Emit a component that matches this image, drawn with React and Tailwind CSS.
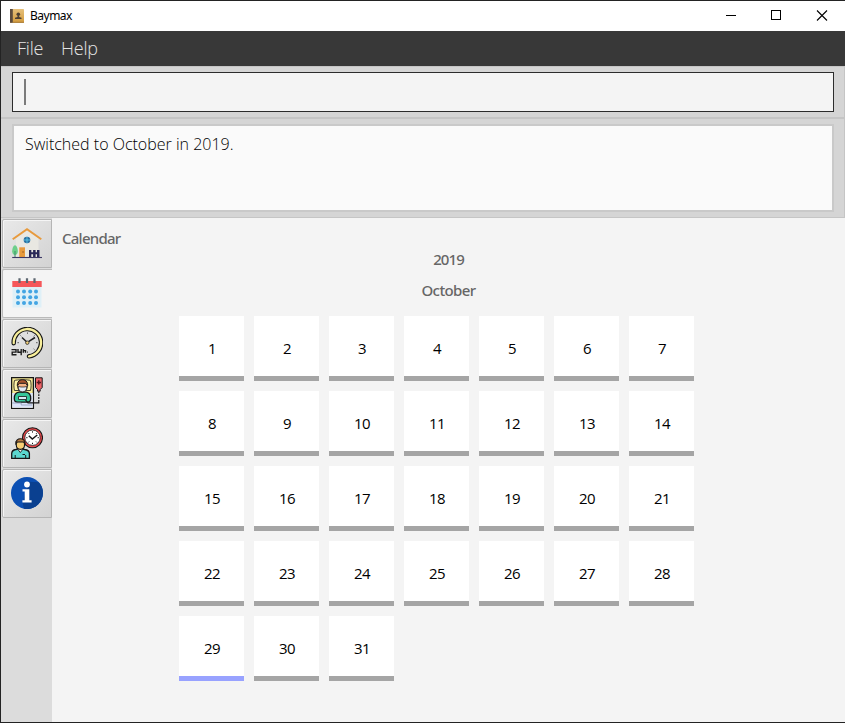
import React from "react";

const HomeIcon = () => (
  <svg width="32" height="32" viewBox="0 0 32 32">
    <path d="M5 11.500 16 3.500l11.500 8V30H5z" fill="#e9e8e2" />
    <path d="M1.700 12.200 16 2.200l14.300 10" fill="none" stroke="#e89a3c" strokeWidth="1.900" />
    <circle cx="16" cy="13" r="3.300" fill="#2b6fa0" />
    <path d="M16 9.700v6.600M12.700 13h6.600" stroke="#5fd0f0" strokeWidth=".8" />
    <rect x="8.300" y="20.300" width="5.700" height="9.700" fill="#e89a3c" />
    <rect x="11.300" y="24.500" width="1.500" height="1" fill="#8a4f1c" />
    <path d="M4 18.300c1.700 0 2.800 3.500 2.800 6S5.500 28 4 28s-2.800-1.200-2.800-3.700S2.300 18.300 4 18.300z" fill="#6ccf8a" />
    <path d="M4 24v6" stroke="#3f8f68" strokeWidth="1" />
    <path d="M18 23h2.300v7H18zM22.100 23h2.500v7h-2.500zM26 23h2.500v7H26zM18 25.200h10.500v2H18z" fill="#2a2858" />
    <path d="M1.200 30.500h29.800" stroke="#3c3966" strokeWidth="1.100" />
  </svg>
);

const CalendarIcon = () => (
  <svg width="32" height="32" viewBox="0 0 32 32">
    <rect x="1.500" y="9" width="29" height="21.500" fill="#dff0f7" />
    <rect x="1.300" y="4" width="29.400" height="6" fill="#f5575a" />
    <path d="M8.500 1.300v4.600M16 1.300v4.600M23.500 1.300v4.600" stroke="#5c6670" strokeWidth="2.200" />
    {[14.500, 20.200, 26].map((y) =>
      [7, 13, 19.200, 25].map((x) => <circle key={`${x}-${y}`} cx={x} cy={y} r="2" fill="#43a5e3" />)
    )}
  </svg>
);

const ClockIcon = () => (
  <svg width="32" height="32" viewBox="0 0 32 32" fill="none">
    <path d="M2.700 16.200A13.700 13.700 0 1 1 18 29.300" stroke="#161616" strokeWidth="4.500" strokeLinecap="round" />
    <path d="M2.700 16.200A13.700 13.700 0 1 1 18 29.300" stroke="#f8ef9b" strokeWidth="2.300" strokeLinecap="round" />
    <path d="M16.500 5.500v1.200M26.500 15.700h-1.300M6.500 15.700h1.300M16.500 25.700v-1.200M9.500 8.500l.8.8M23.500 8.500l-.8.8M23.500 22.700l-.8-.8" stroke="#444" strokeWidth="1" />
    <path d="M11 10.500l4.500 4.300M17.500 14.700l6.500-4.200" stroke="#222" strokeWidth="1.500" />
    <circle cx="16.300" cy="15.700" r="1.700" fill="#f1cf78" stroke="#222" strokeWidth=".8" />
    <path d="M.5 22.600h4.500v2.500H1.200v2.700h4.300M7 22v3.300h3.500M10.200 22v6.300M12.300 22v3.700M12.300 23.600h2.200v2.100" stroke="#1c1c1c" strokeWidth="1.400" />
  </svg>
);

const PatientIcon = () => (
  <svg width="32" height="32" viewBox="0 0 32 32" stroke="#171717" strokeWidth="1">
    <path d="M.6.600h21.800v30.800H.6z" fill="#f6e993" strokeWidth="1.300" />
    <path d="M1.200 16h20.600v14.800H1.200z" fill="#dbe4fb" stroke="none" />
    <path d="M3.500 3.500c2.500-1 13.500-1 16 0 .8 3 .8 7 0 10h-16c-.8-3-.8-7 0-10z" fill="#fff3a8" strokeWidth=".8" />
    <path d="M3.300 21.500c0-4.300 2-6 4.700-6.300h7c2.700.3 4.700 2 4.700 6.300 0 2.500-1 3.700-3.200 3.700h-10c-2.200 0-3.200-1.200-3.200-3.700z" fill="#35c79a" strokeWidth="1.300" />
    <path d="M7.500 19.500h8v3h-8z" fill="#d9eef8" strokeWidth=".8" />
    <path d="M6.700 8.500c0 4.500 2 6.500 4.800 6.500s4.800-2 4.800-6.500l-1.500-4H8.200z" fill="#f4b183" />
    <path d="M6.300 8.500C5.800.8 17.200.8 16.700 8.500l-2-2.200H8.300z" fill="#a9542c" />
    <path d="M7.300 9.500l2.700.5h3l2.700-.5c0 3.500-1.500 5.300-4.200 5.300s-4.200-1.800-4.200-5.300z" fill="#e3ebf7" strokeWidth=".7" />
    <path d="M1.200 26h9v2h11" fill="none" stroke="#8d9bb8" strokeWidth=".8" />
    <path d="M24.500.8h6.700v9.700l-2 2v1.700h-2.700v-1.700l-2-2z" fill="#ee6368" />
    <path d="M27.800 3.300v4.200M25.700 5.400H30" stroke="#551a1d" strokeWidth="1.500" />
    <path d="M27.800 14.500v8.300" strokeDasharray="1.800 1" fill="none" strokeWidth="1.200" />
    <path d="M27.800 23v2.800H17l-2.500-2.800" fill="none" strokeWidth="1.200" />
  </svg>
);

const AppointmentIcon = () => (
  <svg width="32" height="32" viewBox="0 0 32 32" stroke="#171717">
    <circle cx="21.500" cy="10.700" r="10" fill="#e9484c" strokeWidth="1.100" />
    <circle cx="21.500" cy="10.700" r="7.700" fill="#fff" strokeWidth=".8" />
    <path d="M17.800 8.800l3.500 3.200 5-4" fill="none" strokeWidth="1.500" />
    <path d="M21.500 4.300v1.300M21.500 15.800v1.300M15.200 10.700h1.300M26.600 10.700h1.300M17.300 6l.8.8M17.300 15.400l.8-.8M25.900 15.400l-.8-.8M25.900 6l-.8.8" strokeWidth="1" />
    <path d="M.7 31.400v-4.800c0-2.300 1.500-3.700 4.200-4.100l3-.7h2.500l3.200.7c3.300.5 4.800 2 4.800 4.100v4.800z" fill="#5bd7cf" strokeWidth="1.300" />
    <path d="M6.200 21.500l3.100 4 3.200-4z" fill="#f4f4f4" strokeWidth=".9" />
    <path d="M5.300 14.500v3.500c0 5.800 8.200 5.800 8.200 0v-3.500z" fill="#f8cf76" strokeWidth="1.100" />
    <path d="M4.900 17c-1.200-7 10.300-7 9.100 0l-1.500-2H6.400z" fill="#b87a40" strokeWidth="1.100" />
    <path d="M4.200 28v3.400M14.700 28v3.400M11.500 27.500h2.500" fill="none" strokeWidth="1" />
  </svg>
);

const InfoIcon = () => (
  <svg width="32" height="32" viewBox="0 0 32 32">
    <circle cx="16" cy="16" r="16" fill="#0b4fb3" />
    <path d="M18 4.500 27.300 27.300A16 16 0 0 1 13 31.700L11.500 25.500z" fill="#0a4090" />
    <path d="M18 4.700 27.800 5.200A16 16 0 0 1 27.300 27.300L19 20z" fill="#0a4090" />
    <circle cx="16" cy="7.500" r="2.900" fill="#fff" />
    <path d="M11.500 12.300h6.800v10.900h2.300v2.300h-9.200v-2.300h2.300v-8.600h-2.200z" fill="#fff" />
  </svg>
);

const tabs = [HomeIcon, CalendarIcon, ClockIcon, PatientIcon, AppointmentIcon, InfoIcon];
const days = Array.from({ length: 31 }, (_, i) => i + 1);

function TitleBar() {
  return (
    <header className="flex h-[30px] items-center bg-white pl-[9px]">
      <svg width="15" height="15" viewBox="0 0 15 15">
        <defs>
          <linearGradient id="book" x1="0" y1="0" x2="0" y2="1">
            <stop offset="0" stopColor="#e6c07a" />
            <stop offset="1" stopColor="#d29a3c" />
          </linearGradient>
        </defs>
        <rect x="0" y="0" width="14" height="13.800" rx=".8" fill="url(#book)" />
        <path d="M0 0h2.800v13.800H0z" fill="#5c4b3d" />
        <path d="M2.800 12.800H14v1H2.800z" fill="#a87a38" />
        <circle cx="8.300" cy="5.300" r="1.800" fill="#4c3f33" />
        <path d="M7.500 6.500h1.700v1.500l2.300.8v1.300H5V8.800L7.500 8z" fill="#4c3f33" />
      </svg>
      <span className="ml-[5px] font-['Noto_Sans',sans-serif] text-[12px] leading-4 tracking-[-0.5px] text-black">Baymax</span>
      <svg className="ml-auto" width="120" height="30" viewBox="0 0 120 30" fill="none" stroke="#000" shapeRendering="crispEdges">
        <path d="M1 14.500h10" />
        <path d="M46.500 9.500h9v9h-9z" />
        <path d="M92 9.500l10 10M102 9.500l-10 10" strokeWidth="1.100" shapeRendering="auto" />
      </svg>
    </header>
  );
}

function Sidebar() {
  return (
    <nav className="flex w-[51px] flex-col gap-px bg-[#dcdcdc] pt-px pl-px">
      {tabs.map((Icon, i) => (
        <button
          key={i}
          className={
            i === 1
              ? "flex h-[49px] w-[50px] items-center rounded-l-[2px] border border-r-0 border-[#bababa] bg-[#f4f4f4] pb-px pl-2"
              : "flex h-[49px] w-[50px] items-center rounded-l-[2px] border border-[#b5b5b5] bg-linear-to-br from-[#e9e9e9] to-[#d3d3d3] pb-px pl-2 shadow-[inset_1px_1px_0_#f5f5f5]"
          }
        >
          <Icon />
        </button>
      ))}
    </nav>
  );
}

export default function App() {
  return (
    <div className="flex h-[723px] w-[845px] flex-col overflow-hidden border-t border-b border-l border-[#232323] bg-[#f4f4f4] font-['Open_Sans','Noto_Sans',sans-serif]">
      <TitleBar />
      <div className="flex h-[35px] items-center gap-[18px] bg-[#383838] pl-4 text-[18px] font-light tracking-[-0.2px] text-[#e4e4e4]">
        <span className="w-[26px]">File</span>
        <span>Help</span>
      </div>
      <div className="h-[52px] border border-l-0 border-[#c5c5c5] bg-[#d5d5d5] pt-[5px] pl-[11px]">
        <div className="flex h-10 w-[822px] items-center border border-[#2c2c2c] bg-[#f4f4f4] pl-[11px]">
          <div className="h-[26px] w-[2px] bg-[#7b7b7b]" />
        </div>
      </div>
      <div className="h-[100px] border border-l-0 border-[#c5c5c5] bg-[#d5d5d5] pt-[5px] pl-[11px]">
        <div className="h-[88px] w-[822px] border-2 border-[#c9c9c9] bg-[#fafafa] pt-[6px] pl-[11px] text-[16px] leading-6 font-light text-black">
          Switched to October in 2019.
        </div>
      </div>
      <div className="flex min-h-0 flex-1">
        <Sidebar />
        <main className="flex-1 pt-[10px]">
          <h1 className="pl-[10px] font-['Noto_Sans',sans-serif] text-[15px] leading-[21px] font-medium tracking-[-0.75px] text-[#666]">Calendar</h1>
          <div className="text-center font-['Noto_Sans',sans-serif] text-[15px] font-medium text-[#666]">
            <div className="leading-[21px] tracking-[-0.9px]">2019</div>
            <div className="mt-[10px] leading-[21px] tracking-[-0.6px]">October</div>
          </div>
          <div className="mt-[15px] ml-[127px] grid w-[515px] grid-cols-7 gap-[10px]">
            {days.map((d) => (
              <div
                key={d}
                className={`flex h-[65px] items-center justify-center border-b-5 bg-white pt-[5px] pl-px text-[15px] tracking-[-0.6px] text-black ${
                  d === 29 ? "border-[#98a2ff]" : "border-[#a5a5a5]"
                }`}
              >
                {d}
              </div>
            ))}
          </div>
        </main>
      </div>
    </div>
  );
}
